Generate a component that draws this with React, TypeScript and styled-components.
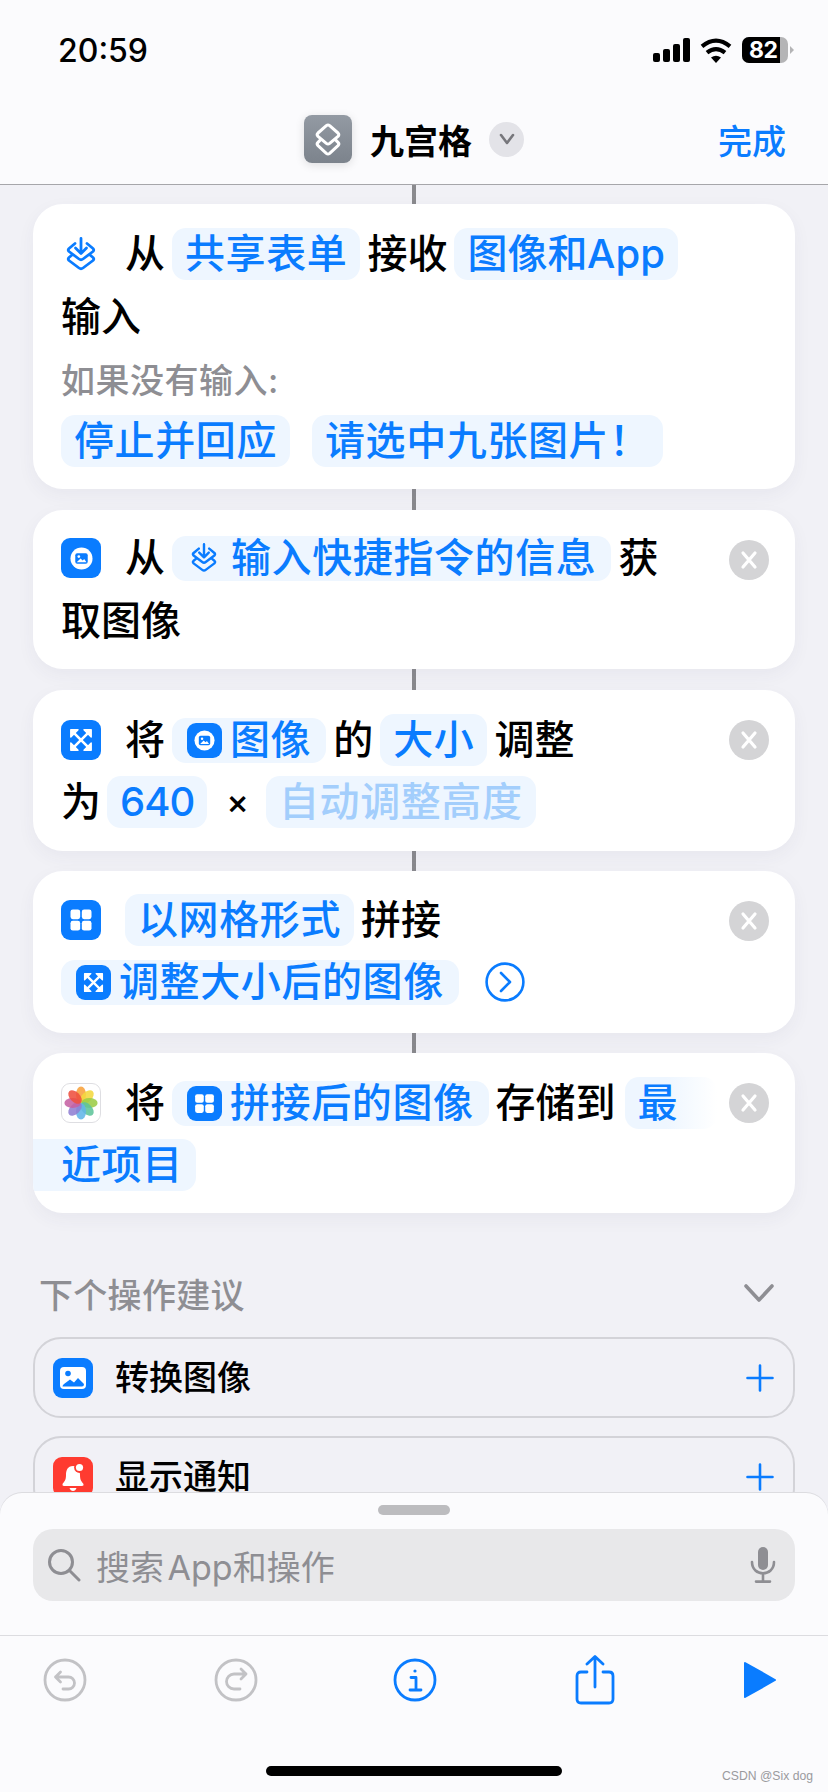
import React from "react";
import styled, { createGlobalStyle } from "styled-components";

const BLUE = "#0a7cff";
const GREY = "#8e8e93";

const GlobalStyle = createGlobalStyle`
  html, body {
    margin: 0;
    padding: 0;
    background: #f1f1f6;
  }
  * {
    box-sizing: border-box;
  }
`;

//------------Page-------------
const Page = styled.div`
  position: relative;
  width: 828px;
  height: 1792px;
  overflow: hidden;
  background: #f1f1f6;
  color: #000;
  font-family: Inter, "Noto Sans CJK SC", sans-serif;
`;

const Header = styled.header`
  height: 185px;
  background: #fbfbfd;
  border-bottom: 1px solid #a6a6aa;
`;

const StatusBar = styled.div`
  height: 100px;
  padding: 0 34px 0 58px;
  display: flex;
  align-items: center;
  justify-content: space-between;
`;

const Time = styled.div`
  font-size: 32px;
  font-weight: 500;
`;

const StatusIcons = styled.div`
  display: flex;
  align-items: center;
  gap: 10px;
`;

const Battery = styled.div`
  position: relative;
  width: 46px;
  height: 26px;
  margin-right: 6px;
  border-radius: 7px;
  background: #b4b4b6;
  color: #fff;
  font-size: 23px;
  font-weight: 700;
  letter-spacing: -0.4px;
  &::after {
    content: "";
    position: absolute;
    right: -6px;
    top: 9px;
    border-left: 4px solid #b4b4b6;
    border-top: 4px solid transparent;
    border-bottom: 4px solid transparent;
  }
`;

const BatteryFill = styled.div`
  width: 38px;
  height: 26px;
  padding-left: 7px;
  border-radius: 7px 0 0 7px;
  background: #000;
  line-height: 26px;
`;

const NavBar = styled.div`
  height: 84px;
  padding: 0 42px 6px;
  display: grid;
  grid-template-columns: 1fr auto 1fr;
  align-items: center;
`;

const NavTitle = styled.div`
  grid-column: 2;
  display: flex;
  align-items: center;
  font-size: 34px;
  font-weight: 600;
`;

const AppTile = styled.div`
  width: 48px;
  height: 48px;
  margin-right: 18px;
  border-radius: 8px;
  background: linear-gradient(#939aa3, #7c838c);
  box-shadow: 0 2px 10px rgba(0, 0, 0, 0.12);
  display: flex;
  align-items: center;
  justify-content: center;
`;

const NavChevron = styled.div`
  width: 35px;
  height: 35px;
  margin-left: 17px;
  border-radius: 50%;
  background: #e3e3e8;
  display: flex;
  align-items: center;
  justify-content: center;
`;

const DoneLink = styled.div`
  justify-self: end;
  color: ${BLUE};
  font-size: 34px;
  font-weight: 500;
`;

const Content = styled.main`
  display: flex;
  flex-direction: column;
  align-items: center;
`;

const Connector = styled.div<{ $h?: number }>`
  width: 4px;
  height: ${(p) => p.$h ?? 20}px;
  background: #8a8a8e;
`;

const Card = styled.section<{ $top: number; $bottom: number; $gap?: number }>`
  position: relative;
  width: 762px;
  padding: ${(p) => p.$top}px 28px ${(p) => p.$bottom}px;
  display: flex;
  flex-direction: column;
  gap: ${(p) => p.$gap ?? 10}px;
  overflow: hidden;
  border-radius: 30px;
  background: #fff;
  box-shadow: 0 6px 18px rgba(60, 60, 90, 0.05);
`;

const Row = styled.div<{ $h?: number }>`
  height: ${(p) => p.$h ?? 52}px;
  display: flex;
  align-items: center;
  gap: 7px;
  font-size: 40px;
  font-weight: 500;
  line-height: 1;
  white-space: nowrap;
`;

const Hint = styled.div`
  height: 40px;
  margin: 7px 0 3px;
  color: ${GREY};
  font-size: 34px;
  font-weight: 500;
  letter-spacing: 0.5px;
  line-height: 40px;
`;

const Chip = styled.span<{ $h?: number; $muted?: boolean }>`
  height: ${(p) => p.$h ?? 52}px;
  padding: 0 13px;
  display: inline-flex;
  align-items: center;
  gap: 8px;
  border-radius: 14px;
  background: #eef6ff;
  color: ${(p) => (p.$muted ? "#a3cefc" : BLUE)};
  letter-spacing: 0.6px;
`;

const IconChip = styled(Chip)`
  padding: 0 15px;
`;

const AppChip = styled(Chip)`
  letter-spacing: 0;
  word-spacing: -11px;
`;

const SpacedChip = styled(Chip)`
  margin-left: 15px;
`;

const NumberChip = styled(Chip)`
  margin-left: -1px;
  letter-spacing: -1px;
`;

const FadeChip = styled(Chip)`
  width: 92px;
  margin-left: 2px;
  background: linear-gradient(90deg, #eef6ff 45%, #ffffff);
`;

const BleedChip = styled(Chip)`
  margin-left: -28px;
  padding-left: 28px;
  border-radius: 0 14px 14px 0;
`;

const Tile = styled.span<{ $size?: number; $color?: string }>`
  flex: none;
  width: ${(p) => p.$size ?? 40}px;
  height: ${(p) => p.$size ?? 40}px;
  border-radius: 9px;
  background: ${(p) => p.$color ?? "#0a7cff"};
  display: inline-flex;
  align-items: center;
  justify-content: center;
`;

const LeadSlot = styled.span`
  flex: none;
  width: 40px;
  margin-right: 17px;
  display: inline-flex;
  align-items: center;
  justify-content: center;
`;

const ChipArrow = styled.span`
  display: inline-flex;
  margin: 0 6px 0 4px;
`;

const PhotosTile = styled(Tile)`
  background: #fff;
  border: 1px solid #dedee2;
`;

const RemoveButton = styled.span`
  position: absolute;
  top: 30px;
  right: 26px;
  width: 40px;
  height: 40px;
  border-radius: 50%;
  background: #d4d4d6;
  display: flex;
  align-items: center;
  justify-content: center;
`;

const TimesMark = styled.span`
  margin: 0 10px 0 12px;
  font-size: 34px;
`;

const MoreButton = styled.span`
  margin-left: 19px;
  display: inline-flex;
`;

const SectionHead = styled.div`
  width: 762px;
  height: 40px;
  margin-top: 60px;
  margin-bottom: 1px;
  padding: 0 20px 0 6px;
  display: flex;
  align-items: center;
  justify-content: space-between;
  color: ${GREY};
  font-size: 34px;
  font-weight: 500;
  letter-spacing: 0.3px;
`;

const Suggestion = styled.div`
  flex: none;
  width: 762px;
  height: 81px;
  margin-top: 18px;
  padding: 0 19px 0 18px;
  display: flex;
  align-items: center;
  gap: 22px;
  border: 2px solid #d3d3d8;
  border-radius: 28px;
  font-size: 34px;
  font-weight: 500;
`;

const FirstSuggestion = styled(Suggestion)`
  margin-top: 23px;
`;

const SuggestionName = styled.span`
  flex: 1;
  padding-bottom: 4px;
`;

const Sheet = styled.footer`
  position: absolute;
  left: 0;
  right: 0;
  bottom: 0;
  height: 299px;
  padding-top: 12px;
  display: flex;
  flex-direction: column;
  align-items: center;
  border-radius: 22px 22px 0 0;
  background: #fbfbfd;
  box-shadow: 0 -1px 0 #dcdce0;
`;

const Handle = styled.div`
  width: 72px;
  height: 10px;
  border-radius: 5px;
  background: #bcbcbf;
`;

const SearchBar = styled.div`
  width: 762px;
  height: 72px;
  margin-top: 14px;
  padding: 0 19px 0 14px;
  display: flex;
  align-items: center;
  border-radius: 20px;
  background: #e8e8ea;
  color: ${GREY};
  font-size: 34px;
  word-spacing: -6px;
`;

const SearchText = styled.span`
  flex: 1;
  margin-left: 15px;
`;

const Toolbar = styled.div`
  width: 100%;
  height: 89px;
  margin-top: 34px;
  padding-right: 10px;
  display: grid;
  grid-template-columns: 130px 212px 146px 214px 116px;
  align-items: center;
  justify-items: center;
  border-top: 1px solid #dcdce0;
`;

const HomeBar = styled.div`
  width: 296px;
  height: 10px;
  margin-top: 42px;
  border-radius: 5px;
  background: #000;
`;

const Watermark = styled.div`
  position: absolute;
  right: 15px;
  bottom: 9px;
  color: #9a9a9d;
  font-family: "Liberation Sans", sans-serif;
  font-size: 12.2px;
`;

//=========================================

function ShortcutGlyph({ size, color }: { size: number; color: string }) {
  return (
    <svg width={size} height={size} viewBox="0 0 24 24" fill="none" stroke={color} strokeWidth="1.8" strokeLinejoin="round" strokeLinecap="round">
      <path d="M11 4 Q12 3.2 13 4 L18 8.4 Q19 9.4 18 10.4 L13 14.6 Q12 15.4 11 14.6 L6 10.4 Q5 9.4 6 8.4 Z" />
      <path d="M7.6 12.4 L6 14 Q5 15 6 16 L11 20.6 Q12 21.4 13 20.6 L18 16 Q19 15 18 14 L16.4 12.4" />
    </svg>
  );
}

function ReceiveGlyph({ width }: { width: number }) {
  // stacked diamonds with the arrow dropping into the top one
  return (
    <svg width={width} height={(width * 34) / 30} viewBox="0 0 30 34" fill="none" stroke={BLUE} strokeWidth="2.8" strokeLinejoin="round" strokeLinecap="round">
      <path d="M9 6.5 L3 11.5 Q1.5 13 3 14.5 L13 22 Q15 23.5 17 22 L27 14.5 Q28.5 13 27 11.5 L21 6.5" />
      <path d="M15 1.5 V16 M9.5 11 L15 16.5 L20.5 11" />
      <path d="M6 18 L3 20.5 Q1.5 22 3 23.5 L13 31 Q15 32.5 17 31 L27 23.5 Q28.5 22 27 20.5 L24 18" />
    </svg>
  );
}

function ImageGlyph({ size }: { size: number }) {
  // white blob with a small picture cut out
  return (
    <svg width={size} height={size} viewBox="0 0 24 24">
      <circle cx="12" cy="12" r="11.5" fill="#fff" />
      <rect x="5.5" y="6.5" width="13" height="11" rx="2" fill={BLUE} />
      <circle cx="9.2" cy="10" r="1.4" fill="#fff" />
      <path d="M7 16 L11 12 L13.2 14 L14.8 12.6 L17.2 16 Z" fill="#fff" />
    </svg>
  );
}

function PictureGlyph() {
  return (
    <svg width="28" height="28" viewBox="0 0 28 28">
      <rect x="1" y="3" width="26" height="22" rx="4" fill="#fff" />
      <circle cx="9" cy="9.5" r="2.8" fill={BLUE} />
      <path d="M3.5 22.5 Q3.5 21 5 20 L11 15.5 L15 18.5 L19 14 L25 20 Q25 22.5 23 22.5 Z" fill={BLUE} />
    </svg>
  );
}

function ResizeGlyph({ size }: { size: number }) {
  return (
    <svg width={size} height={size} viewBox="2 2 20 20" fill="#fff" stroke="#fff" strokeWidth="1.2" strokeLinecap="round" strokeLinejoin="round">
      <path d="M5 5 L19 19 M19 5 L5 19" strokeWidth="2.2" />
      <path d="M3.5 3.5 H9.5 L3.5 9.5 Z M20.5 3.5 H14.5 L20.5 9.5 Z M3.5 20.5 H9.5 L3.5 14.5 Z M20.5 20.5 H14.5 L20.5 14.5 Z" />
    </svg>
  );
}

function GridGlyph({ size }: { size: number }) {
  return (
    <svg width={size} height={size} viewBox="0 0 24 24" fill="#fff">
      <rect x="3" y="3" width="8.3" height="8.3" rx="2" />
      <rect x="12.7" y="3" width="8.3" height="8.3" rx="2" />
      <rect x="3" y="12.7" width="8.3" height="8.3" rx="2" />
      <rect x="12.7" y="12.7" width="8.3" height="8.3" rx="2" />
    </svg>
  );
}

const petalColors = ["#f8a23c", "#f4d83f", "#9ccc47", "#5fc49a", "#62b5e8", "#8f80d3", "#c561a3", "#ee503f"];

function PhotosGlyph() {
  return (
    <svg width="36" height="36" viewBox="0 0 36 36">
      {petalColors.map((color, i) => (
        <ellipse key={color} cx="18" cy="9.6" rx="5" ry="8.2" fill={color} opacity="0.88" transform={`rotate(${i * 45} 18 18)`} />
      ))}
    </svg>
  );
}

function BellGlyph() {
  return (
    <svg width="30" height="32" viewBox="0 0 30 32" fill="#fff">
      <path d="M15 5 C9.5 5 8 9.5 8 14 C8 19 6.5 20.5 4.5 23 Q4 25 6 25 H24 Q26 25 25.5 23 C23.5 20.5 22 19 22 14 C22 9.5 20.5 5 15 5 Z" />
      <path d="M11.5 27 H18.5 Q17.5 30 15 30 Q12.5 30 11.5 27 Z" />
      <circle cx="21.5" cy="6.5" r="5.4" fill="#ff3b30" />
      <circle cx="21.5" cy="6.5" r="3.6" />
    </svg>
  );
}

function Remove() {
  return (
    <RemoveButton>
      <svg width="18" height="20" viewBox="0 0 18 20" stroke="#fff" strokeWidth="3.2" strokeLinecap="round">
        <path d="M3 3 L15 17 M15 3 L3 17" />
      </svg>
    </RemoveButton>
  );
}

function Plus() {
  return (
    <svg width="28" height="28" viewBox="0 0 28 28" stroke={BLUE} strokeWidth="2.6" strokeLinecap="round">
      <path d="M14 1.5 V26.5 M1.5 14 H26.5" />
    </svg>
  );
}

function ToolCircle({ color, children }: { color: string; children: React.ReactNode }) {
  return (
    <svg width="44" height="44" viewBox="0 0 44 44" fill="none" stroke={color} strokeWidth="2.8" strokeLinecap="round" strokeLinejoin="round">
      <circle cx="22" cy="22" r="20" />
      {children}
    </svg>
  );
}

export default function App() {
  return (
    <Page>
      <GlobalStyle />
      <Header>
        <StatusBar>
          <Time>20:59</Time>
          <StatusIcons>
            <svg width="37" height="24" viewBox="0 0 37 24" fill="#000">
              <rect x="0" y="15" width="7" height="9" rx="2" />
              <rect x="10" y="11" width="7" height="13" rx="2" />
              <rect x="20" y="6" width="7" height="18" rx="2" />
              <rect x="30" y="0" width="7" height="24" rx="2" />
            </svg>
            <svg width="32" height="25" viewBox="0 0 32 25">
              <path d="M16 25 L11 19.6 Q16 15.8 21 19.6 Z" fill="#000" />
              <path d="M7 14.6 Q16 7.5 25 14.6 M2 8.4 Q16 -3 30 8.4" fill="none" stroke="#000" strokeWidth="4.2" />
            </svg>
            <Battery>
              <BatteryFill>82</BatteryFill>
            </Battery>
          </StatusIcons>
        </StatusBar>
        <NavBar>
          <NavTitle>
            <AppTile>
              <ShortcutGlyph size={40} color="#fff" />
            </AppTile>
            九宫格
            <NavChevron>
              <svg width="18" height="14" viewBox="0 0 18 14" fill="none" stroke="#77777c" strokeWidth="2.6" strokeLinecap="round" strokeLinejoin="round">
                <path d="M3 3 L9 11 L15 3" />
              </svg>
            </NavChevron>
          </NavTitle>
          <DoneLink>完成</DoneLink>
        </NavBar>
      </Header>

      <Content>
        <Connector $h={19} />
        <Card $top={24} $bottom={22} $gap={11}>
          <Row>
            <LeadSlot>
              <ReceiveGlyph width={30} />
            </LeadSlot>
            <span>从</span>
            <Chip>共享表单</Chip>
            <span>接收</span>
            <AppChip>图像和 App</AppChip>
          </Row>
          <Row>输入</Row>
          <Hint>如果没有输入:</Hint>
          <Row>
            <Chip>停止并回应</Chip>
            <SpacedChip>请选中九张图片！</SpacedChip>
          </Row>
        </Card>

        <Connector $h={21} />
        <Card $top={24} $bottom={24} $gap={15}>
          <Row $h={48}>
            <LeadSlot>
              <Tile>
                <ImageGlyph size={23} />
              </Tile>
            </LeadSlot>
            <span>从</span>
            <IconChip $h={45}>
              <ChipArrow>
                <ReceiveGlyph width={26} />
              </ChipArrow>
              输入快捷指令的信息
            </IconChip>
            <span>获</span>
          </Row>
          <Row $h={48}>取图像</Row>
          <Remove />
        </Card>

        <Connector $h={21} />
        <Card $top={24} $bottom={23}>
          <Row>
            <LeadSlot>
              <Tile>
                <ResizeGlyph size={24} />
              </Tile>
            </LeadSlot>
            <span>将</span>
            <IconChip $h={45}>
              <Tile $size={35}>
                <ImageGlyph size={21} />
              </Tile>
              图像
            </IconChip>
            <span>的</span>
            <Chip>大小</Chip>
            <span>调整</span>
          </Row>
          <Row>
            <span>为</span>
            <NumberChip>640</NumberChip>
            <TimesMark>×</TimesMark>
            <Chip $muted>自动调整高度</Chip>
          </Row>
          <Remove />
        </Card>

        <Connector />
        <Card $top={23} $bottom={25}>
          <Row>
            <LeadSlot>
              <Tile>
                <GridGlyph size={28} />
              </Tile>
            </LeadSlot>
            <Chip>以网格形式</Chip>
            <span>拼接</span>
          </Row>
          <Row>
            <IconChip $h={45}>
              <Tile $size={35}>
                <ResizeGlyph size={21} />
              </Tile>
              调整大小后的图像
            </IconChip>
            <MoreButton>
              <svg width="40" height="40" viewBox="0 0 40 40" fill="none" stroke={BLUE} strokeWidth="2.6" strokeLinecap="round" strokeLinejoin="round">
                <circle cx="20" cy="20" r="18.4" />
                <path d="M16 11 L25 20 L16 29" />
              </svg>
            </MoreButton>
          </Row>
          <Remove />
        </Card>

        <Connector />
        <Card $top={24} $bottom={22}>
          <Row>
            <LeadSlot>
              <PhotosTile>
                <PhotosGlyph />
              </PhotosTile>
            </LeadSlot>
            <span>将</span>
            <IconChip $h={45}>
              <Tile $size={35}>
                <GridGlyph size={25} />
              </Tile>
              拼接后的图像
            </IconChip>
            <span>存储到</span>
            <FadeChip>最</FadeChip>
          </Row>
          <Row>
            <BleedChip>近项目</BleedChip>
          </Row>
          <Remove />
        </Card>

        <SectionHead>
          下个操作建议
          <svg width="32" height="20" viewBox="0 0 32 20" fill="none" stroke={GREY} strokeWidth="3.6" strokeLinecap="round" strokeLinejoin="round">
            <path d="M3 3 L16 17 L29 3" />
          </svg>
        </SectionHead>
        <FirstSuggestion>
          <Tile>
            <PictureGlyph />
          </Tile>
          <SuggestionName>转换图像</SuggestionName>
          <Plus />
        </FirstSuggestion>
        <Suggestion>
          <Tile $color="#ff3b30">
            <BellGlyph />
          </Tile>
          <SuggestionName>显示通知</SuggestionName>
          <Plus />
        </Suggestion>
      </Content>

      <Sheet>
        <Handle />
        <SearchBar>
          <svg width="34" height="34" viewBox="0 0 34 34" fill="none" stroke={GREY} strokeWidth="3" strokeLinecap="round">
            <circle cx="14" cy="14" r="11.5" />
            <path d="M22.5 22.5 L32 32" />
          </svg>
          <SearchText>搜索 App和操作</SearchText>
          <svg width="26" height="36" viewBox="0 0 26 36" fill="none" stroke={GREY} strokeWidth="2.6" strokeLinecap="round">
            <rect x="8" y="0" width="10" height="23" rx="5" fill={GREY} stroke="none" />
            <path d="M2 15 C2 30 24 30 24 15 M13 27 V34 M6 34.6 H20" />
          </svg>
        </SearchBar>
        <Toolbar>
          <ToolCircle color="#c2c2c5">
            <path d="M17.5 14 L12.5 19 L17.5 24 M12.5 19 H25.5 A6 6 0 0 1 25.5 31 H20" />
          </ToolCircle>
          <ToolCircle color="#c2c2c5">
            <path d="M27 11 L32 16 L27 21 M32 16 H20 A7.5 7.5 0 0 0 20 31 H26" />
          </ToolCircle>
          <ToolCircle color={BLUE}>
            <circle cx="22" cy="13" r="1.6" fill={BLUE} stroke="none" />
            <path d="M18 19.5 H23 V31 M17 32 H28" />
          </ToolCircle>
          <svg width="40" height="50" viewBox="0 0 40 50" fill="none" stroke={BLUE} strokeWidth="2.8" strokeLinecap="round" strokeLinejoin="round">
            <path d="M12 17 H6 Q2 17 2 21 V44 Q2 48 6 48 H34 Q38 48 38 44 V21 Q38 17 34 17 H28" />
            <path d="M20 32 V2 M12 9 L20 1.5 L28 9" />
          </svg>
          <svg width="34" height="38" viewBox="0 0 34 38" fill={BLUE} stroke={BLUE} strokeWidth="2" strokeLinejoin="round">
            <path d="M2 2 L32 19 L2 36 Z" />
          </svg>
        </Toolbar>
        <HomeBar />
        <Watermark>CSDN @Six dog</Watermark>
      </Sheet>
    </Page>
  );
}
